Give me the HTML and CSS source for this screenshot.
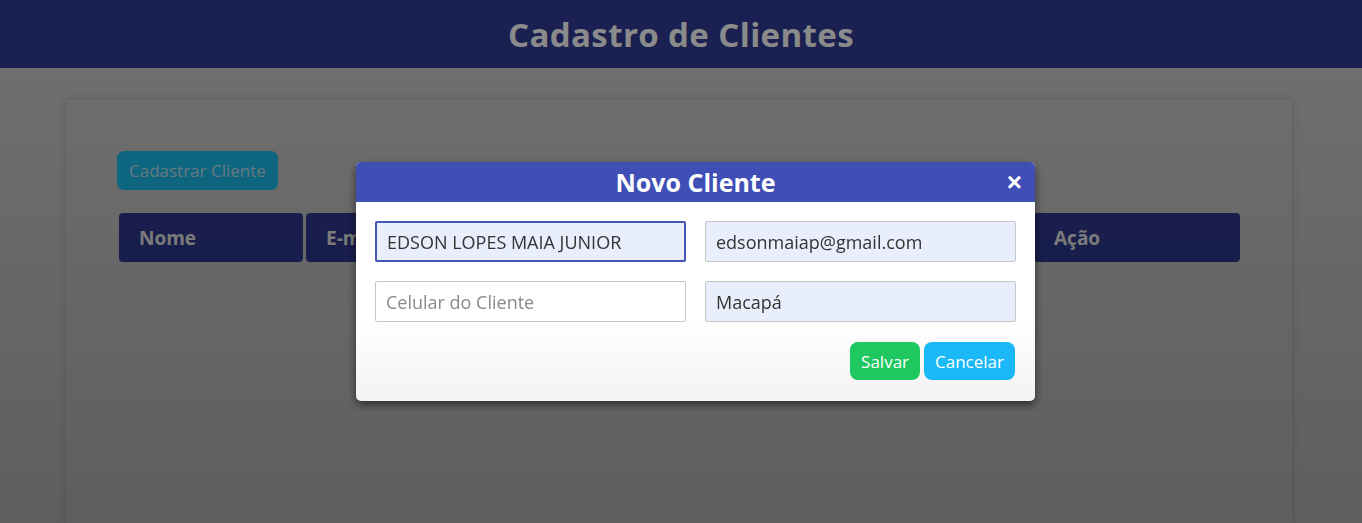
FILE: index.html
```html
<!DOCTYPE html>
<html>
<head>
  <title>Cadastro de Clientes</title>
  <link rel="stylesheet" href="styles.css">
</head>
<body>
  <header class="topbar">
      <h1>Cadastro de Clientes</h1>
  </header>
  <main class="card">
      <button class="btn-new">Cadastrar Cliente</button>
      <table class="clients">
          <thead>
              <tr>
                  <th class="col-name">Nome</th>
                  <th>E-mail</th>
                  <th>Celular</th>
                  <th>Cidade</th>
                  <th class="col-action">Ação</th>
              </tr>
          </thead>
          <tbody></tbody>
      </table>
  </main>
  <div class="backdrop">
      <div class="modal">
          <div class="modal-header">
              <span></span>
              <h2>Novo Cliente</h2>
              <button class="close">&times;</button>
          </div>
          <form class="modal-body">
              <input class="field focused" type="text" value="EDSON LOPES MAIA JUNIOR">
              <input class="field filled" type="email" value="edsonmaiap@gmail.com">
              <input class="field" type="text" placeholder="Celular do Cliente">
              <input class="field filled" type="text" value="Macapá">
              <div class="actions">
                  <button type="button" class="btn btn-save">Salvar</button>
                  <button type="button" class="btn btn-cancel">Cancelar</button>
              </div>
          </form>
      </div>
  </div>
</body>
</html>
```

FILE: styles.css
```css
body {
    font-family: "Open Sans", Arial, sans-serif;
    background-color: #cecece;
    color: #333;
    margin: 0;
    padding: 0;
    height: 100vh;
    overflow: hidden;
}
.topbar {
    background-color: #313c95;
    height: 68px;
    display: flex;
    align-items: center;
    justify-content: center;
}
.topbar h1 {
    margin: 0;
    color: #ffffff;
    font-size: 33px;
    font-weight: 700;
    letter-spacing: 0.4px;
}
.card {
    box-sizing: border-box;
    margin: 32px 70px 0 66px;
    height: calc(100vh - 100px);
    padding: 51px 49px 0 51px;
    box-shadow: 0 0 8px rgba(0, 0, 0, 0.16);
}
.btn-new {
    display: block;
    height: 39px;
    padding: 0 12px;
    border: none;
    border-radius: 7px;
    background-color: #1cc3f8;
    color: #c4e8f4;
    font-family: inherit;
    font-size: 17px;
}
.clients {
    margin-top: 23px;
    margin-left: -1px;
    width: calc(100% + 1px);
    border-collapse: separate;
    border-spacing: 3px 0;
}
.clients th {
    height: 49px;
    padding: 0 20px;
    background-color: #313c95;
    color: #f2f2f2;
    text-align: left;
    font-size: 19px;
    font-weight: 700;
    border-radius: 4px;
}
.col-name {
    width: 144px;
}
.col-action {
    width: 166px;
}
.backdrop {
    position: fixed;
    top: 0;
    left: 0;
    right: 0;
    bottom: 0;
    background: linear-gradient(rgba(0, 0, 0, 0.45), rgba(0, 0, 0, 0.54));
    display: flex;
    justify-content: center;
    align-items: flex-start;
    padding: 162px 0 0 29px;
}
.modal {
    width: 679px;
    border-radius: 5px;
    background: linear-gradient(#ffffff 65%, #f3f3f3);
    box-shadow: 0 4px 10px rgba(0, 0, 0, 0.55);
    overflow: hidden;
}
.modal-header {
    height: 40px;
    background-color: #3f4fb6;
    display: grid;
    grid-template-columns: 1fr auto 1fr;
    align-items: center;
}
.modal-header h2 {
    margin: 0;
    color: #ffffff;
    font-size: 25px;
    font-weight: 700;
}
.close {
    justify-self: end;
    margin-right: 13px;
    border: none;
    background: transparent;
    color: #ffffff;
    font-size: 26px;
    font-weight: 700;
    line-height: 1;
    padding: 0;
}
.modal-body {
    display: grid;
    grid-template-columns: 1fr 1fr;
    gap: 19px;
    padding: 19px 19px 21px;
}
.field {
    box-sizing: border-box;
    height: 41px;
    width: 100%;
    padding: 0 10px;
    border: 1px solid #c6c6c6;
    border-radius: 2px;
    background-color: #ffffff;
    color: #333;
    font-family: inherit;
    font-size: 18px;
}
.field::placeholder {
    color: #8a8a8a;
}
.field.filled {
    background-color: #e8eefc;
}
.field.focused {
    background-color: #e8eefc;
    border: 2px solid #4655b8;
    outline: none;
}
.actions {
    grid-column: 1 / 3;
    display: flex;
    justify-content: flex-end;
    gap: 4px;
    margin-top: 1px;
    padding-right: 1px;
}
.btn {
    height: 38px;
    padding: 0 11px;
    border: none;
    border-radius: 8px;
    color: #ffffff;
    font-family: inherit;
    font-size: 17px;
}
.btn-save {
    background-color: #1ec75f;
}
.btn-cancel {
    background-color: #1ab8f6;
}
```
